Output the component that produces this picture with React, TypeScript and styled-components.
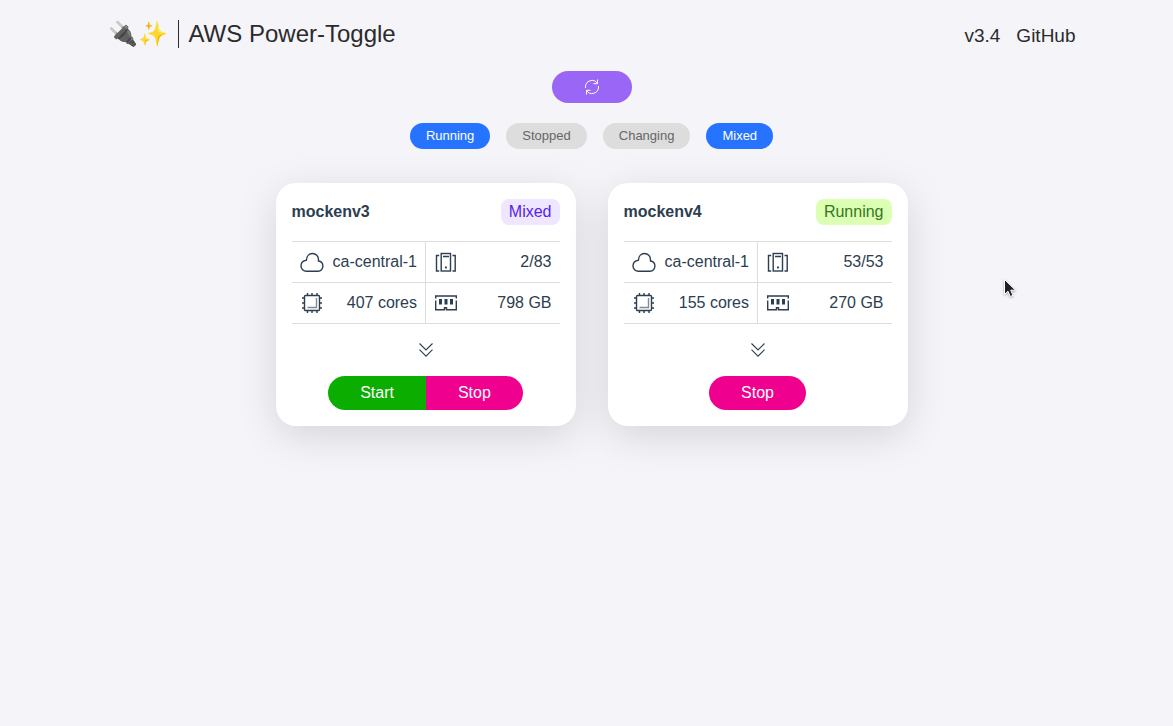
import React from "react";
import styled, { createGlobalStyle } from "styled-components";

const GlobalStyle = createGlobalStyle`
  *, *::before, *::after { box-sizing: border-box; }
  body {
    min-height: 100vh;
    margin: 0;
    padding-left: 10px;
    background: #f4f4f9;
    color: #2c3e50;
    font-family: "Liberation Sans", Arial, sans-serif;
    font-size: 16px;
    line-height: 18px;
  }
  button { font: inherit; border: 0; cursor: pointer; }
`;

const Header = styled.header`
  display: flex;
  justify-content: space-between;
  align-items: center;
  max-width: 968px;
  margin: 0 auto;
  padding: 20px 0 23px;
  color: #2b2b2b;
`;

const Brand = styled.h1`
  display: flex;
  align-items: center;
  margin: 0;
  font-size: 24px;
  line-height: 28px;
  font-weight: 400;
`;

const Emoji = styled.span`
  padding-right: 10px;
  border-right: 1px solid #2b2b2b;
  margin-right: 10px;
  white-space: nowrap;
`;

const Nav = styled.nav`
  display: flex;
  gap: 16px;
  padding-top: 4px;
  font-size: 19px;
  line-height: 24px;
`;

const NavLink = styled.a`
  color: inherit;
  text-decoration: none;
`;

const Controls = styled.div`
  display: flex;
  flex-direction: column;
  align-items: center;
  gap: 20px;
`;

const RefreshButton = styled.button`
  display: flex;
  align-items: center;
  justify-content: center;
  width: 80px;
  height: 32px;
  padding: 0;
  border-radius: 16px;
  background: #9966f6;
  color: #fff;
`;

const Filters = styled.div`
  display: flex;
  flex-wrap: wrap;
  justify-content: center;
  gap: 16px;
`;

const FilterButton = styled.button<{ $active: boolean }>`
  padding: 5px 16px;
  border-radius: 13px;
  font-size: 13px;
  line-height: 16px;
  background: ${(p) => (p.$active ? "#2673ff" : "#dddddd")};
  color: ${(p) => (p.$active ? "#fff" : "#666")};
`;

const Cards = styled.main`
  display: flex;
  flex-wrap: wrap;
  justify-content: center;
  gap: 32px;
  padding: 34px 16px;
`;

const Card = styled.section`
  width: 300px;
  padding: 16px;
  border-radius: 20px;
  background: #fff;
  box-shadow: 0 10px 40px rgba(0, 0, 0, 0.13);
`;

const CardHeader = styled.div`
  display: flex;
  justify-content: space-between;
  align-items: center;
  margin-bottom: 16px;
`;

const EnvName = styled.h2`
  margin: 0;
  font-size: 16px;
  font-weight: 700;
`;

const Badge = styled.span<{ $state: EnvState }>`
  padding: 4px 8px;
  border-radius: 8px;
  background: ${(p) => (p.$state === "Mixed" ? "#efe6ff" : "#dbffb3")};
  color: ${(p) => (p.$state === "Mixed" ? "#5522ee" : "#38761d")};
`;

const Stats = styled.table`
  width: 100%;
  border-collapse: collapse;
  table-layout: fixed;
`;

const StatCell = styled.td`
  padding: 8px;
  border-top: 1px solid #dddddd;
  border-bottom: 1px solid #dddddd;
  & + & { border-left: 1px solid #dddddd; }
`;

const Stat = styled.div`
  display: flex;
  align-items: center;
  justify-content: space-between;
  height: 24px;
  white-space: nowrap;
`;

const ExpandButton = styled.button`
  display: flex;
  align-items: center;
  justify-content: center;
  width: 100%;
  padding: 18px 0;
  background: none;
  color: inherit;
`;

const Actions = styled.div`
  display: flex;
  justify-content: center;
`;

const ActionButton = styled.button<{ $kind: "start" | "stop" }>`
  padding: 8px 32px;
  background: ${(p) => (p.$kind === "start" ? "#0aad00" : "#f0008f")};
  color: #fff;
  &:first-child { border-top-left-radius: 17px; border-bottom-left-radius: 17px; }
  &:last-child { border-top-right-radius: 17px; border-bottom-right-radius: 17px; }
`;

const Pointer = styled.svg`
  position: absolute;
  left: 1003px;
  top: 278px;
  pointer-events: none;
  filter: drop-shadow(0 1px 1px rgba(0, 0, 0, 0.3));
`;

const StatIcon = ({ children }: { children: React.ReactNode }) => (
  <svg width="24" height="24" viewBox="0 0 24 24" fill="none" stroke="currentColor" strokeWidth="1.4" aria-hidden="true">
    {children}
  </svg>
);

const CloudIcon = () => (
  <StatIcon>
    <path d="M6.4 21.3C3.4 21.3 1 19 1 15.9c0-3 2.2-5.3 5.4-5.7C6.5 6.3 9 3.5 12.5 3.5s6 2.8 6 6.3c0 .4 0 .8-.1 1.2 2.7.3 4.5 2.4 4.5 5.1s-2 5.2-4.8 5.2z" strokeLinejoin="round" />
  </StatIcon>
);

const ServersIcon = () => (
  <StatIcon>
    <rect x="7.2" y="3.5" width="9.3" height="17.5" />
    <path d="M5.2 5.500H2.500V21h2.700M18.500 5.500h2.700V21h-2.700M9 6.500h6" />
    <rect x="11" y="16.500" width="1.900" height="1.900" fill="currentColor" stroke="none" />
  </StatIcon>
);

const ChipIcon = () => (
  <StatIcon>
    <rect x="4.500" y="4.500" width="15" height="15" rx="1" />
    <path d="M7.500 2v2.500M12 2v2.500M17 2v2.500M7.500 19.500V22M12 19.500V22M17 19.500V22M2 7h2.500M2 12h2.500M2 17h2.500M19.500 7H22M19.500 12H22M19.500 17H22" />
    <path d="M16.500 7v9.500H7.500" opacity="0.6" />
  </StatIcon>
);

const MemoryIcon = () => (
  <StatIcon>
    <path d="M1.700 7.500V5h20.600v2.500M1.700 9.500v9.300h8.800v-2h2v2h9.800V9.500" />
    <path d="M5 8h3v5.500H5zM10.500 8h3v5.500h-3zM16 8h3v5.500h-3z" fill="currentColor" stroke="none" />
  </StatIcon>
);

const RefreshIcon = () => (
  <svg width="16" height="16" viewBox="0 0 16 16" fill="none" stroke="currentColor" strokeWidth="1" aria-hidden="true">
    <path d="M1.500 9V8A6.500 6.500 0 0 1 13.500 4.500M14.500 7v1A6.500 6.500 0 0 1 2.500 11.500M13.500.5v4.200h-4M2.500 15.500v-4.200h4" />
  </svg>
);

const ChevronsIcon = () => (
  <svg width="16" height="16" viewBox="0 0 16 16" fill="none" stroke="currentColor" strokeWidth="1.1" aria-hidden="true">
    <path d="M1.500 1.500 8 8l6.500-6.500M1.500 7.700 8 14.200l6.500-6.500" />
  </svg>
);

type EnvState = "Running" | "Mixed";

interface Env {
  name: string;
  state: EnvState;
  region: string;
  instances: string;
  cores: string;
  memory: string;
}

const envs: Env[] = [
  { name: "mockenv3", state: "Mixed", region: "ca-central-1", instances: "2/83", cores: "407 cores", memory: "798 GB" },
  { name: "mockenv4", state: "Running", region: "ca-central-1", instances: "53/53", cores: "155 cores", memory: "270 GB" },
];

const filters = [
  { label: "Running", active: true },
  { label: "Stopped", active: false },
  { label: "Changing", active: false },
  { label: "Mixed", active: true },
];

const EnvCard = ({ env }: { env: Env }) => (
  <Card>
    <CardHeader>
      <EnvName>{env.name}</EnvName>
      <Badge $state={env.state}>{env.state}</Badge>
    </CardHeader>
    <Stats>
      <tbody>
        <tr>
          <StatCell><Stat><CloudIcon />{env.region}</Stat></StatCell>
          <StatCell><Stat><ServersIcon />{env.instances}</Stat></StatCell>
        </tr>
        <tr>
          <StatCell><Stat><ChipIcon />{env.cores}</Stat></StatCell>
          <StatCell><Stat><MemoryIcon />{env.memory}</Stat></StatCell>
        </tr>
      </tbody>
    </Stats>
    <ExpandButton type="button" aria-label="Show details"><ChevronsIcon /></ExpandButton>
    <Actions>
      {env.state === "Mixed" && <ActionButton type="button" $kind="start">Start</ActionButton>}
      <ActionButton type="button" $kind="stop">Stop</ActionButton>
    </Actions>
  </Card>
);

export default function App() {
  return (
    <>
      <GlobalStyle />
      <Header>
        <Brand><Emoji>🔌✨</Emoji>AWS Power-Toggle</Brand>
        <Nav>
          <NavLink href="#version">v3.4</NavLink>
          <NavLink href="#github">GitHub</NavLink>
        </Nav>
      </Header>
      <Controls>
        <RefreshButton type="button" aria-label="Refresh"><RefreshIcon /></RefreshButton>
        <Filters>
          {filters.map((f) => (
            <FilterButton key={f.label} type="button" $active={f.active} aria-pressed={f.active}>{f.label}</FilterButton>
          ))}
        </Filters>
      </Controls>
      <Cards>
        {envs.map((env) => <EnvCard key={env.name} env={env} />)}
      </Cards>
      <Pointer width="14" height="21" viewBox="0 0 14 21" aria-hidden="true">
        <path d="M1.500 1.500v15l3.500-3.300 2.300 5.300 2.700-1.200-2.300-5.100h4.800z" fill="#222" stroke="#fff" strokeWidth="1" />
      </Pointer>
    </>
  );
}
